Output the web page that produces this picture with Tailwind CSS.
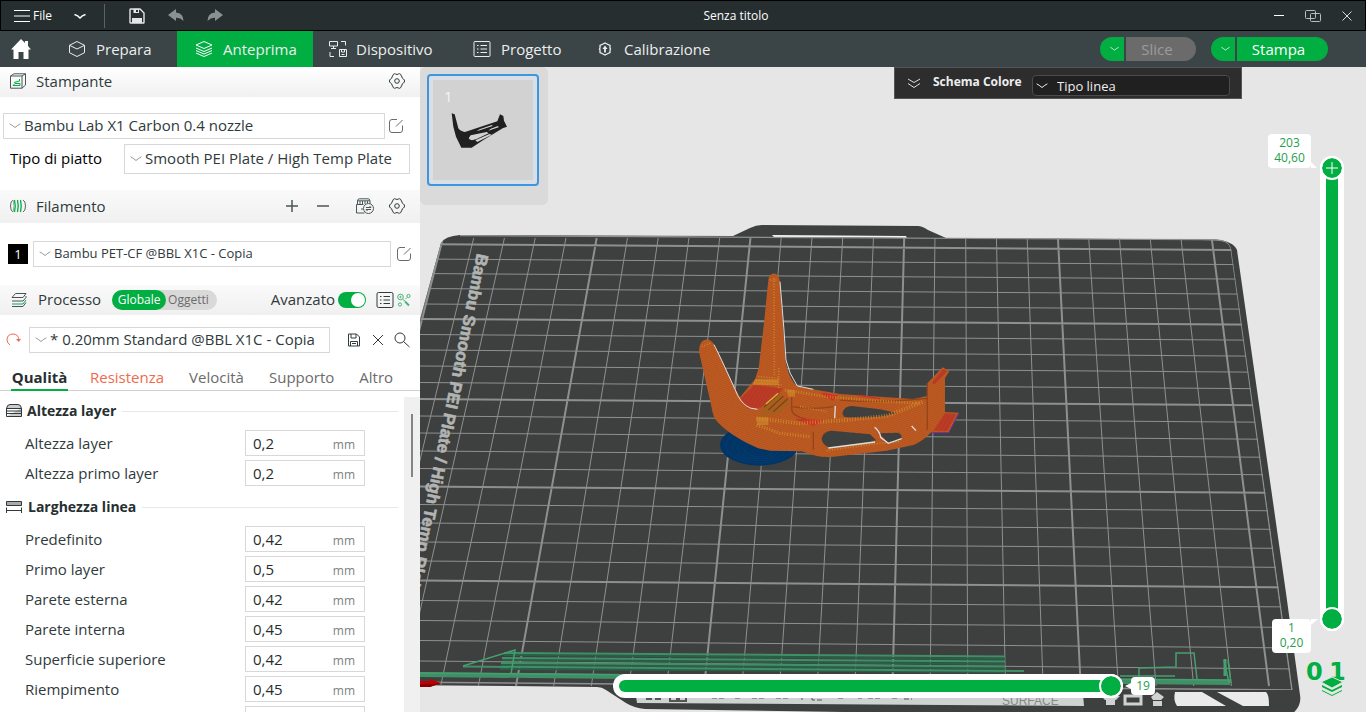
<!DOCTYPE html>
<html lang="it">
<head>
<meta charset="utf-8">
<title>Senza titolo</title>
<script src="https://cdn.jsdelivr.net/npm/@tailwindcss/browser@4"></script>
</head>
<body class="flex h-screen flex-col overflow-hidden bg-white font-['Open_Sans','Noto_Sans',sans-serif] text-[15px] leading-5 text-[#303a3c]">

<!-- shared symbols -->
<svg class="hidden" aria-hidden="true">
  <symbol id="chev" viewBox="0 0 12 8"><path d="M1 2 Q3 3 6 5.5 Q9 3 11 2" fill="none" stroke="currentColor" stroke-linecap="round"/></symbol>
  <symbol id="gear" viewBox="0 0 16 16"><g fill="none" stroke="currentColor"><path d="M4.500 1.200Q5.500 .3 6.500 1Q8 2 9.500 1Q10.500 .3 11.500 1.200L13 4Q13 5.500 14.500 6Q15.700 7 15.500 8Q15.700 9 14.500 10Q13 10.500 13 12L11.500 14.800Q10.500 15.700 9.500 15Q8 14 6.500 15Q5.500 15.700 4.500 14.800L3 12Q3 10.500 1.500 10Q.3 9 .5 8Q.3 7 1.500 6Q3 5.500 3 4Z" stroke-linejoin="round"/><circle cx="8" cy="8" r="2.300"/></g></symbol>
  <symbol id="edit" viewBox="0 0 16 16"><path d="M9 1.500H4Q1.500 1.500 1.500 4V12Q1.500 14.500 4 14.500H12Q14.500 14.500 14.500 12V7.500M8 8.500L14.500 2" fill="none" stroke="currentColor"/></symbol>
</svg>

<header class="flex h-[31px] shrink-0 items-center border border-black bg-[#262e30] text-white">
  <div class="flex w-60 items-center text-xs">
    <button class="ml-3 flex items-center gap-[3px]" aria-label="File"><svg class="h-4 w-[17px]" viewBox="0 0 17 16" stroke="#fff" stroke-width="1.200"><path d="M1 2.500H17M1 8H17M1 13.500H17"/></svg>File</button>
    <button class="ml-5" aria-label="Apri menu"><svg class="h-3 w-4" viewBox="0 0 16 12"><path d="M2.500 4.500Q6 5.500 8 8Q10 5.500 13.500 4.500" fill="none" stroke="#fff" stroke-width="1.400"/></svg></button>
    <span class="ml-4 h-6 w-px bg-[#5a6365]"></span>
    <button class="ml-6" aria-label="Salva"><svg class="h-4 w-4" viewBox="0 0 16 16" fill="none" stroke="#e4e6e6" stroke-width="1.400"><path d="M1 1.500Q1 1 1.500 1H11L15 5V14.500Q15 15 14.500 15H1.500Q1 15 1 14.500Z"/><path d="M3 10H13V15H3ZM4.500 1H10V5H4.500Z" fill="#e4e6e6" stroke="none"/><path d="M7 2H9V4H7Z" fill="#262e30" stroke="none"/></svg></button>
    <button class="ml-[23px]" aria-label="Annulla"><svg class="h-4 w-4" viewBox="0 0 16 16"><path d="M0 7L8 1V4.500Q15.500 5 15.500 13Q12 9.500 8 9.800V13Z" fill="#8b9091"/></svg></button>
    <button class="ml-[23px]" aria-label="Ripeti"><svg class="h-4 w-4" viewBox="0 0 16 16"><path d="M16 7L8 1V4.500Q.5 5 .5 13Q4 9.500 8 9.800V13Z" fill="#8b9091"/></svg></button>
  </div>
  <h1 class="flex-1 text-center text-xs">Senza titolo</h1>
  <div class="flex w-[134px] items-center justify-end gap-5 pr-3">
    <button aria-label="Riduci"><svg class="h-3 w-3" viewBox="0 0 12 12"><path d="M1 5.500H11" stroke="#fff"/></svg></button>
    <button aria-label="Ripristina"><svg class="h-3 w-4" viewBox="0 0 16 12" fill="none" stroke="#b9bdbe"><rect x=".5" y=".5" width="10" height="8" rx="1"/><rect x="5.500" y="3.500" width="10" height="8" rx="1"/></svg></button>
    <button aria-label="Chiudi"><svg class="h-3 w-3" viewBox="0 0 12 12"><path d="M1.500 1.500L10.500 10.500M10.500 1.500L1.500 10.500" stroke="#d8dbdb"/></svg></button>
  </div>
</header>

<nav class="flex h-9 shrink-0 items-stretch bg-[#3b4446] text-[#eceeee]">
  <button class="flex w-[41px] items-center justify-center" aria-label="Home"><svg class="h-5 w-5" viewBox="0 0 20 20"><path d="M10 0L14 4V2H17V7L20 10.500H17.500V20H12.500V13H7.500V20H2.500V10.500H0Z" fill="#fff"/></svg></button>
  <button class="flex w-[136px] items-center gap-[10px] pl-[27px]"><svg class="h-[18px] w-[18px]" viewBox="0 0 18 18" fill="none" stroke="currentColor"><path d="M9 1.500L16.500 5.300V12.700L9 16.500L1.500 12.700V5.300ZM1.500 5.300L9 9L16.500 5.300"/></svg>Prepara</button>
  <button class="flex w-[136px] items-center gap-[10px] bg-[#00ae42] pl-[18px]"><svg class="h-[18px] w-[18px]" viewBox="0 0 18 18" fill="none" stroke="#fff"><path d="M9 1.500L17 5L9 8.500L1 5Z M1 8L9 11.500L17 8M1 10.500L9 14L17 10.500M1 13L9 16.500L17 13"/></svg>Anteprima</button>
  <button class="flex w-[142px] items-center gap-2 pl-[15px]"><svg class="h-[18px] w-5" viewBox="0 0 20 18" fill="none" stroke="currentColor"><path d="M1.500 1.500H9.500V6H1.500ZM5.500 6V8M3 8.500H8M13 1.500H17.500V5.500M2 12V16.500H6M11.500 9.500H18.500V16.500H11.500ZM13.500 9.500V12H16.500V9.500M13.500 14.500H16.500"/></svg>Dispositivo</button>
  <button class="flex w-[126px] items-center gap-[10px] pl-[18px]"><svg class="h-[18px] w-[18px]" viewBox="0 0 18 18" fill="none" stroke="currentColor"><rect x="1" y="1.500" width="16" height="15" rx="1"/><path d="M4 5.500H5.500M7.500 5.500H14M4 9H5.500M7.500 9H14M4 12.500H5.500M7.500 12.500H14"/></svg>Progetto</button>
  <button class="flex w-[140px] items-center gap-[11px] pl-4"><svg class="h-4 w-4" viewBox="0 0 16 16" fill="none" stroke="currentColor" stroke-width="1.300"><path d="M6 3L8 2L10 3L13 4.500V7L13.500 8L13 9V11.500L10 13L8 14L6 13L3 11.500V9L2.500 8L3 7V4.500Z"/><path d="M8 11.500V7" stroke-width="1.800"/><path d="M5.500 8L8 4.500L10.500 8Z" fill="currentColor" stroke="none"/></svg>Calibrazione</button>
  <div class="ml-auto flex items-center gap-[15px] pr-[38px] text-base">
    <div class="flex gap-0.5">
      <button class="flex h-6 w-6 items-center justify-center rounded-l-full bg-[#00ae42] pl-1 text-white" aria-label="Opzioni slice"><svg class="h-2 w-[9px]"><use href="#chev"/></svg></button>
      <button class="h-6 w-[70px] rounded-r-full bg-[#6b6b6b] pr-2 text-[15px] text-[#9c9c9c]">Slice</button>
    </div>
    <div class="flex gap-0.5">
      <button class="flex h-6 w-6 items-center justify-center rounded-l-full bg-[#00ae42] pl-1 text-white" aria-label="Opzioni stampa"><svg class="h-2 w-[9px]"><use href="#chev"/></svg></button>
      <button class="h-6 w-[91px] rounded-r-full bg-[#00ae42] pr-2 text-[15px] text-white">Stampa</button>
    </div>
  </div>
</nav>

<div class="flex min-h-0 flex-1">
<aside class="flex w-[420px] shrink-0 flex-col overflow-hidden">
  <div class="flex h-[30px] shrink-0 items-center bg-linear-to-b from-white to-[#f0f0f0] pr-[15px] pb-0.5 pl-[10px]">
    <svg class="mr-[10px] h-4 w-4" viewBox="0 0 16 16" fill="none" stroke="#4b5557"><path d="M.5 3L4 .8H15.500V12L12 15.200H.5ZM.5 3H12V15.200M12 3L15.500 .8"/><path d="M3 12.500L5 10.500H10V12.500ZM4 9.500L9.500 8V6" stroke="#00ae42"/></svg>
    <h2 class="flex-1">Stampante</h2>
    <button aria-label="Impostazioni stampante"><svg class="h-4 w-4"><use href="#gear"/></svg></button>
  </div>
  <div class="mt-4 flex items-center gap-[3px] pl-[3px]">
    <div class="relative w-[382px]"><select aria-label="Stampante" class="block h-[26px] w-full appearance-none border border-[#d8d8d8] bg-white pb-0.5 pl-5"><option>Bambu Lab X1 Carbon 0.4 nozzle</option></select><svg class="pointer-events-none absolute top-[9px] left-[6px] h-2 w-3 text-[#999]"><use href="#chev"/></svg></div>
    <button aria-label="Modifica stampante" class="text-[#6b6b6b]"><svg class="h-4 w-4"><use href="#edit"/></svg></button>
  </div>
  <div class="mt-[5px] flex items-center pl-[10px]">
    <label for="piatto" class="w-[114px] pb-0.5 text-black">Tipo di piatto</label>
    <div class="relative w-[286px]"><select id="piatto" class="block h-[30px] w-full appearance-none border border-[#d8d8d8] bg-white pb-0.5 pl-5"><option>Smooth PEI Plate / High Temp Plate</option></select><svg class="pointer-events-none absolute top-[11px] left-[6px] h-2 w-3 text-[#999]"><use href="#chev"/></svg></div>
  </div>
  <div class="mt-4 flex h-[33px] shrink-0 items-center bg-linear-to-b from-[#fafafa] to-[#f0f0f0] pr-[15px] pb-0.5 pl-[10px]">
    <svg class="mr-[10px] h-4 w-4" viewBox="0 0 16 16" fill="none"><path d="M3 2Q.500 3 .5 8Q.5 13 3 14M13 2Q15.500 3 15.500 8Q15.500 13 13 14" stroke="#5c6668"/><path d="M4.500 2Q6 8 4.500 14M7.500 2Q9 8 7.500 14M10.500 2Q12 8 10.500 14" stroke="#00ae42" stroke-width="1.300"/><path d="M3 2Q5 8 3 14" stroke="#8fae9b"/></svg>
    <h2 class="flex-1">Filamento</h2>
    <div class="flex items-center">
      <button aria-label="Aggiungi filamento" class="mr-[19px]"><svg class="h-3 w-3" viewBox="0 0 12 12"><path d="M6 0V12M0 6H12" stroke="#4b5557" stroke-width="1.500"/></svg></button>
      <button aria-label="Rimuovi filamento" class="mr-[27px]"><svg class="h-3 w-3" viewBox="0 0 12 12"><path d="M0 6H12" stroke="#4b5557" stroke-width="1.500"/></svg></button>
      <button aria-label="AMS" class="mr-[15px]"><svg class="h-4 w-[18px]" viewBox="0 0 18 16" fill="none" stroke="#4b5557"><path d="M1.500 6V3Q1.500 .8 3.500 .8H12Q14 .8 14 3V6M1.500 2.800H14M4 3V6.500M6.500 3V6.500M9 3V6M11.500 3V5M.5 6.500H7.500M.5 6.500V15H8.500M5 11H7"/><circle cx="12.500" cy="10.500" r="5" fill="#f4f4f4"/><path d="M10 9.500H15L13.500 8M15 11.500H10L11.500 13"/></svg></button>
      <button aria-label="Impostazioni filamento"><svg class="h-4 w-4"><use href="#gear"/></svg></button>
    </div>
  </div>
  <div class="mt-[18px] flex items-center pl-2 text-[13px]">
    <button class="mr-[5px] h-5 w-5 bg-black text-white">1</button>
    <div class="relative w-[358px]"><select aria-label="Filamento 1" class="block h-[26px] w-full appearance-none border border-[#d8d8d8] bg-white pb-0.5 pl-5"><option>Bambu PET-CF @BBL X1C - Copia</option></select><svg class="pointer-events-none absolute top-[9px] left-[6px] h-2 w-3 text-[#999]"><use href="#chev"/></svg></div>
    <button aria-label="Modifica filamento" class="ml-[5px] text-[#6b6b6b]"><svg class="h-4 w-4"><use href="#edit"/></svg></button>
  </div>
  <div class="mt-[18px] flex h-[30px] shrink-0 items-center bg-linear-to-b from-[#fafafa] to-[#f0f0f0] pr-[9px] pl-[11px]">
    <svg class="mr-[11px] h-4 w-4" viewBox="0 0 16 16" fill="none" stroke="#4b5557"><path d="M4.500 1.500H15L12 5.500H1ZM1 9H12L15 5.500V4M1 14.500H12L15 10.500"/><path d="M1 12H12L15 8" stroke="#00ae42"/></svg>
    <h2 class="pb-0.5">Processo</h2>
    <div class="ml-[11px] flex h-5 items-center rounded-full bg-[#d9d9d9] pr-2 text-xs text-[#6b6b6b]">
      <button class="h-5 w-[54px] rounded-full bg-[#00ae42] text-white">Globale</button><button class="ml-0.5">Oggetti</button>
    </div>
    <label for="avanzato" class="ml-auto pb-0.5">Avanzato</label>
    <input id="avanzato" type="checkbox" checked class="ml-[3px] h-4 w-7 appearance-none rounded-full bg-[#00ae42] after:ml-[13px] after:mt-px after:block after:h-[14px] after:w-[14px] after:rounded-full after:bg-white">
    <button aria-label="Elenco" class="ml-[10px]"><svg class="h-[18px] w-[18px]" viewBox="0 0 18 18" fill="none" stroke="#303a3c"><rect x="1" y="1.500" width="16" height="15" rx="1.500"/><path d="M4 5.500H5.500M7.500 5.500H14M4 9H5.500M7.500 9H14M4 12.500H5.500M7.500 12.500H14"/></svg></button>
    <button aria-label="Confronta" class="ml-[3px]"><svg class="h-[14px] w-[14px]" viewBox="0 0 14 14" fill="none" stroke="#48b573"><circle cx="3.500" cy="4" r="2.800"/><circle cx="3.500" cy="4" r=".7"/><circle cx="11.500" cy="3" r="1.600"/><circle cx="3" cy="11.500" r="1.600"/><path d="M6 6.500L8 8M10 4.500L8.500 6"/><path d="M8 8.500L12 12.500" stroke-width="1.800"/></svg></button>
  </div>
  <div class="mt-3 flex items-center pl-[6px]">
    <button aria-label="Ripristina valori"><svg class="h-4 w-4" viewBox="0 0 16 16" fill="none" stroke="#ee6b4d"><path d="M4 13Q1 11 1 7.500Q1.500 2 7 2Q12.500 2 13 8"/><path d="M10 7H15L12.700 10Z" fill="#ee6b4d" stroke="none"/></svg></button>
    <div class="relative ml-[7px] w-[301px]"><select aria-label="Processo" class="block h-[26px] w-full appearance-none border border-[#d8d8d8] bg-white pb-0.5 pl-5"><option>* 0.20mm Standard @BBL X1C - Copia</option></select><svg class="pointer-events-none absolute top-[9px] left-[6px] h-2 w-3 text-[#999]"><use href="#chev"/></svg></div>
    <button aria-label="Salva profilo" class="ml-[17px]"><svg class="h-[14px] w-[14px]" viewBox="0 0 14 14" fill="none" stroke="#303a3c"><path d="M1.500 1H9.500L12.500 4V13H1.500ZM4 1V5H9V1M3.500 13V8.500H10.500V13M5 10.500H9"/></svg></button>
    <button aria-label="Elimina profilo" class="ml-[11px]"><svg class="h-3 w-3" viewBox="0 0 12 12"><path d="M1 1L11 11M11 1L1 11" stroke="#303a3c"/></svg></button>
    <button aria-label="Cerca" class="ml-[10px]"><svg class="h-4 w-4" viewBox="0 0 16 16" fill="none" stroke="#303a3c"><circle cx="6" cy="6" r="5"/><path d="M9.500 9.500L15.500 15"/></svg></button>
  </div>
  <div class="mt-3 flex h-[26px] shrink-0 items-stretch gap-[22px] border-b border-[#d0d0d0] pl-[11px] text-[#6b6b6b]">
    <button class="-mb-px w-[57px] border-b-2 border-[#00ae42] font-bold text-[#262e30]">Qualità</button>
    <button class="pb-0.5 text-[#ee6b4d]">Resistenza</button>
    <button class="ml-[3px] pb-0.5">Velocità</button>
    <button class="ml-[3px] pb-0.5">Supporto</button>
    <button class="ml-[3px] pb-0.5">Altro</button>
  </div>
  <div class="flex min-h-0 flex-1 overflow-hidden">
    <div class="flex-1 pt-[5px] pr-[6px]">
      <h3 class="flex h-[30px] items-center pl-[6px] text-sm font-bold text-[#262e30]"><svg class="mr-[5px] h-4 w-4" viewBox="0 0 16 16" fill="none" stroke="#303a3c"><path d="M.5 5.500Q1 1.500 4 1.500H12Q15 1.500 15.500 5.500ZM.5 8H15.500M.5 10.500H15.500M.5 13.500H15.500V5M.5 5V13.500" fill="#ccc"/></svg>Altezza layer<span class="ml-[6px] h-px flex-1 bg-[#e8e8e8]"></span></h3>
      <div id="g1" class="mt-0.5"></div>
      <h3 class="mt-1 flex h-[30px] items-center pl-[6px] text-sm font-bold text-[#262e30]"><svg class="mr-[6px] h-4 w-4" viewBox="0 0 16 16" fill="none" stroke="#303a3c"><path d="M.5 2.500H15.500V6.500H.5Z" fill="#aaa"/><path d="M.5 8.500V14M15.500 8.500V14M.5 11.500H15.500"/></svg>Larghezza linea<span class="ml-[6px] h-px flex-1 bg-[#e8e8e8]"></span></h3>
      <div id="g2" class="mt-0.5"></div>
    </div>
    <div class="mt-[6px] w-4 bg-[#f0f0f0] pt-[17px]"><div class="ml-[7px] h-[63px] w-0.5 bg-[#858585]"></div></div>
  </div>
</aside>

<main class="relative min-w-0 flex-1 overflow-hidden bg-[#e6e6e6]">
  <svg class="absolute inset-0 h-full w-full" viewBox="420 67 946 645" preserveAspectRatio="xMinYMin slice" role="img" aria-label="Anteprima del modello sul piatto">
    <defs>
      <clipPath id="bed"><path d="M400 395L441 243Q445 236 460 235L1216 239Q1229 240 1231 248L1293 690H400Z"/></clipPath>
      <pattern id="hatch" width="3" height="6" patternUnits="userSpaceOnUse" patternTransform="rotate(20)"><rect width="3" height="6" fill="#c05c23"/><rect width="3" height="3" fill="#b2531f"/></pattern>
      <pattern id="redhatch" width="10" height="10" patternUnits="userSpaceOnUse" patternTransform="rotate(30)"><rect width="10" height="10" fill="#c4362c"/><rect width="4" height="10" fill="#a8401c"/></pattern>
    </defs>
    <path d="M400 392L441 243Q445 236 460 235L733 236L750 228Q756 225 762 225L918 226Q922 226 928 230L946 238L1216 239.500Q1233 241 1237 250L1286 593L1300 695Q1302 706 1292 714H976L645 709Q634 708 626 703L606 690Q602 687 597 687L400 685Z" fill="#3e403f"/>
    <path d="M772 235L906 236L907 238L774 237Z" fill="#f2f2f2"/>
    <g clip-path="url(#bed)" fill="none" stroke="#8e908f">
      <path id="thin" stroke-width="1"/>
      <path id="bold" stroke-width="2"/>
      <path d="M1190 239L1216 240Q1229 240 1231 248L1292 690M441 243L400 392M400 682L1292 690M460 235.500L1200 239.500" stroke-width="1.500"/>
    </g>
    <text transform="translate(477 253) rotate(101.500)" font-family="Liberation Sans" font-weight="700" font-size="17" fill="#b2b4b3" stroke="#b2b4b3" stroke-width=".6">Bambu Smooth PEI Plate / High Temp Plate</text>

    <!-- lower label strip and cut-outs of the plate -->
    <path d="M635 690L1083 694L1084 706L637 703Z" fill="#cfd2d2"/>
    <g stroke="#555" stroke-width="2" fill="none"><path d="M646 699H652M655 699H661M670 698V701H686V698M676 699H680"/><path d="M712 698H724M735 698H742M752 698H766M776 698H790M802 698V700M812 698V700H824M838 698H844M858 698H862M868 698H880M892 698H898M904 699H912" stroke-width="1" stroke-dasharray="5 2"/></g>
    <text x="1002" y="705" font-family="Liberation Sans" font-size="12" fill="#888">SURFACE</text>
    <g fill="#cfd2d2"><path d="M1101 696H1120L1116 700H1105ZM1106 700H1115V705H1106ZM1151 697L1157 692L1164 697L1161 700H1153ZM1153 701H1162V706H1153Z"/><path d="M1125 696H1141V704H1125Z" fill="none" stroke="#cfd2d2" stroke-width="3"/></g>
    <path d="M1175 692H1202L1226 706H1177Q1173 700 1175 692ZM1217 692H1266Q1269 694 1269 706H1243Z" fill="#eaeaea"/>

    <!-- wipe and purge moves -->
    <g fill="none" stroke="#2a5f47" stroke-width="2"><path d="M504 655L1005 659M502 660L1005 664M501 665L1005 668.500M500 669L1005 672"/></g>
    <g fill="none" stroke="#3f8f67" stroke-width="2"><path d="M504 653L1005 656.500M502 658L1005 661.500M501 663L1005 666.500M463 666.500L1024 671"/><path d="M420 674.500L1230 682.500" stroke-width="5"/></g>
    <g fill="none" stroke="#45a070" stroke-width="1.500"><path d="M420 673L1230 680M463 666L515 650L511 674M1139 684V668L1176 667V653H1194L1197 679M1224 660L1229 683M1228 660L1231 683M1120 676H1175"/><path d="M1225 659V676" stroke-width="3"/></g>
    <path d="M416 681H430V679L441 683L430 687H416Z" fill="#c00000"/><path d="M416 684H430L441 683L430 687H416Z" fill="#8a0000"/>

    <!-- sliced part: one drawing unit is a third of a plate unit -->
    <g transform="translate(640 250) scale(.3333)">
      <ellipse cx="358" cy="585" rx="118" ry="62" fill="#003566"/>
      <g fill="none" stroke="#0d4c85" stroke-width="2" opacity=".5"><ellipse cx="358" cy="587" rx="100" ry="52"/><ellipse cx="358" cy="590" rx="82" ry="42"/><ellipse cx="358" cy="594" rx="64" ry="32"/><ellipse cx="358" cy="598" rx="46" ry="22"/></g>
      <path d="M385 90C388 64 415 64 419 90L430 240L436 330C442 365 455 398 475 410L600 432L720 440L820 447L862 438V400L908 352L928 364L915 385V486L956 488L926 548H872Q850 572 820 585L740 602L600 618Q560 624 530 618L485 604L390 602L355 595C300 570 260 545 232 515C216 500 216 470 210 450L178 310C174 275 195 262 212 272C226 282 230 300 237 312L285 415L300 442L345 388L356 355L372 220Z" fill="url(#hatch)"/>
      <path d="M607 490Q612 468 636 468L720 478L770 489L735 498Q650 506 612 500ZM545 565Q548 545 575 542L690 553L708 570L690 577L570 593Q545 585 545 565ZM718 550L775 548Q792 556 780 570L745 580Z" fill="#3e403f"/>
      <path d="M455 470Q520 480 580 470M455 440L455 480Q460 500 500 508M520 545V600M862 400V540M600 450Q720 460 860 445" stroke="#95451a" stroke-width="4" fill="none"/>
      <path d="M300 447L342 404L430 416L372 472L325 476Z" fill="url(#redhatch)"/>
      <path d="M365 470L410 430L452 455L420 490L365 500Z" fill="#a85f1e"/>
      <path d="M372 472L418 430M385 480L430 438M400 485L443 446" stroke="#7e431a" stroke-width="4"/>
      <path d="M378 462L415 430" stroke="#e3b53a" stroke-width="4"/>
      <path d="M875 400L908 358L922 364L885 402ZM915 490L950 492L922 543L880 542Z" fill="url(#redhatch)"/>
      <path d="M545 430L590 438L578 450ZM470 508L545 512L520 526ZM655 436L720 446" fill="#cc3027" stroke="#cc3027" stroke-width="4"/>
      <path d="M873 548H926L957 490" stroke="#74309a" stroke-width="3" fill="none"/>
      <g fill="none" stroke="#d08f2c" stroke-width="5" stroke-dasharray="3 5" opacity=".8"><path d="M402 85L403 380M342 400L425 405M355 380L420 385M348 390L420 395M416 355V415M390 90H412M185 290L210 280" /><path d="M350 505L480 520L620 510L740 498L850 455" stroke-width="12"/><path d="M350 525L420 550L510 560" stroke-width="10"/><path d="M435 420L560 440L700 452L840 460" stroke-width="9"/><path d="M560 602L700 582L780 575M480 470L560 485"/></g>
      <path d="M348 502H385V525H352ZM440 420H465V440H445ZM345 388H415V405H338Z" fill="#d59a2c" opacity=".5"/>
      <g fill="none" stroke="#dedede" stroke-width="3"><path d="M222 284Q236 310 285 418Q300 460 330 474L352 478"/><path d="M420 95L432 240L438 330Q446 370 472 408L520 418"/><path d="M586 468L584 505M565 594L705 576M704 532Q720 545 722 562L745 580L785 566M815 528L828 542" stroke-width="4"/></g>
    </g>

    <g fill="#00ae42"><text x="1306" y="680" font-family="DejaVu Sans" font-weight="700" font-size="24">0</text><text x="1329" y="680" font-family="DejaVu Sans" font-weight="700" font-size="24">1</text>
      <path d="M1332 677L1343 682L1332 688L1321 682Z" stroke="#e6e6e6"/><path d="M1322 685L1332 690L1342 685V687L1332 692L1322 687ZM1322 690L1332 695L1342 690V691L1332 696L1322 691Z"/></g>
  </svg>

  <div class="absolute top-0 left-0 h-[138px] w-32 rounded-md bg-[#dadada] pt-[7px] pl-[7px]">
    <button class="relative block h-[112px] w-[112px] rounded border-2 border-[#3d97e0] bg-[#d9dfe4] p-1" aria-label="Piatto 1">
      <svg class="h-full w-full bg-[#d2d2d2]" viewBox="39 240 300 300"><g fill="#202020"><path d="M95 340L104 343L115 385Q122 395 135 396L232 364L240 343L250 348L252 362L261 380L248 385L190 420L155 443H124L108 410L100 380ZM146 415Q150 424 168 418L206 400L200 396L152 406ZM172 426L215 404L208 402L166 421ZM170 394L218 378L216 375L178 388ZM205 392L236 382L234 378L212 386Z" fill-rule="evenodd"/></g></svg>
      <span class="absolute top-[10px] left-[15px] text-[15px] text-[#f4f4f4]">1</span>
    </button>
  </div>

  <div class="absolute top-0 right-[124px] flex h-8 w-[348px] items-center border border-[#55565a] bg-[#2d2d2e] pl-3 text-[13px] text-[#eee]">
    <button aria-label="Comprimi"><svg class="h-3 w-[14px]" viewBox="0 0 14 12" fill="none" stroke="#ddd"><path d="M1 2L7 5.500L13 2M1 6.500L7 10.500L13 6.500"/></svg></button>
    <label for="schema" class="ml-3 w-[99px] pb-0.5 text-xs font-bold">Schema Colore</label>
    <div class="relative mt-1"><select id="schema" class="block h-[21px] w-[198px] appearance-none rounded border border-[#4b4b4f] bg-[#202020] pb-0.5 pl-6"><option>Tipo linea</option></select><svg class="pointer-events-none absolute top-[7px] left-1 h-2 w-3"><use href="#chev"/></svg></div>
  </div>

  <!-- layer range -->
  <div class="absolute top-[89px] right-[22px] h-[475px] w-6 rounded-full bg-white">
    <div class="absolute inset-x-[6px] top-3 bottom-3 bg-[#00ae42]"></div>
    <div class="absolute top-0.5 left-0.5 flex h-5 w-5 items-center justify-center rounded-full bg-[#00ae42] outline-2 outline-white"><svg class="h-3 w-3" viewBox="0 0 12 12"><path d="M6 0V12M0 6H12" stroke="#fff"/></svg></div>
    <div class="absolute bottom-0.5 left-0.5 h-5 w-5 rounded-full bg-[#00ae42] outline-2 outline-white"></div>
    <input type="range" aria-label="Layer" min="1" max="203" value="203" class="absolute inset-0 h-full w-full opacity-0 [writing-mode:vertical-lr]">
  </div>
  <output class="absolute top-[67px] right-[55px] w-[43px] rounded-sm bg-white pt-px pb-[3px] text-center text-xs leading-[15px] text-[#1f9d4d]">203<br>40,60<svg class="absolute -right-[6px] bottom-0 h-[6px] w-[6px]" viewBox="0 0 6 6"><path d="M0 0L6 6H0Z" fill="#fff"/></svg></output>
  <output class="absolute top-[552px] right-[55px] w-[39px] rounded-sm bg-white pt-px pb-[3px] text-center text-xs leading-[15px] text-[#1f9d4d]">1<br>0,20<svg class="absolute top-0 -right-[7px] h-[6px] w-[7px]" viewBox="0 0 7 6"><path d="M0 0H7L0 6Z" fill="#fff"/></svg></output>

  <!-- move range -->
  <div class="absolute top-[607px] left-[193px] h-6 w-[510px] rounded-full bg-white">
    <div class="absolute inset-[6px] rounded-full bg-[#00ae42]"></div>
    <div class="absolute top-0.5 right-0.5 h-5 w-5 rounded-full bg-[#00ae42] outline-2 outline-white"></div>
    <input type="range" aria-label="Movimento" min="0" max="19" value="19" class="absolute inset-0 h-full w-full opacity-0">
  </div>
  <output class="absolute top-[610px] left-[711px] w-6 rounded-sm bg-white text-center text-xs leading-[18px] text-[#1f9d4d]">19<svg class="absolute top-[6px] -left-[6px] h-[6px] w-[6px]" viewBox="0 0 6 6"><path d="M6 0V6L0 3Z" fill="#fff"/></svg></output>
</main>
</div>

<template id="row">
  <div class="flex h-[30px] items-center pl-[25px]">
    <label class="w-[220px]"></label>
    <div class="flex h-[26px] w-[120px] items-center border border-[#d8d8d8] pr-[9px] pl-[7px]">
      <input type="text" class="min-w-0 flex-1 text-[#262e30]"><span class="pt-1 text-xs text-[#7c8283]">mm</span>
    </div>
  </div>
</template>
<script>
  const tpl = document.getElementById('row');
  let n = 0;
  function fill(id, rows) {
    for (const [name, value] of rows) {
      const r = tpl.content.cloneNode(true), l = r.querySelector('label'), i = r.querySelector('input');
      i.id = 'campo' + (++n); l.htmlFor = i.id; l.textContent = name; i.setAttribute('value', value);
      if (!value) r.querySelector('span').remove();
      document.getElementById(id).append(r);
    }
  }
  fill('g1', [['Altezza layer', '0,2'], ['Altezza primo layer', '0,2']]);
  fill('g2', [['Predefinito', '0,42'], ['Primo layer', '0,5'], ['Parete esterna', '0,42'], ['Parete interna', '0,45'], ['Superficie superiore', '0,42'], ['Riempimento', '0,45'], ['', '']]);

  // Plate grid in perspective: every fifth line is heavy.
  const left = [244, 259, 273.5, 288.5, 304, 319, 334.5, 350, 366, 382.5, 399, 416, 433, 451, 468.5, 486.5, 504.5, 523, 542, 561, 580.5, 600.5, 620.5, 640.5, 661];
  const right = [250.5, 265, 279.5, 294.5, 309.5, 325, 340.5, 356.5, 372.5, 389, 405.5, 422.5, 439.5, 457.5, 475, 493, 511, 529.5, 548.5, 567.5, 587.5, 607, 627.5, 648, 669];
  let thin = '', bold = '';
  left.forEach((y, k) => { const s = `M420 ${y}L1300 ${right[k]}`; k % 5 ? thin += s : bold += s; });
  for (let k = -9; k < 25; k++) {
    const s = `M${473.7 + 30.75 * k} 238L${365.4 + 37.65 * k} 686`;
    (k + 1) % 5 ? thin += s : bold += s;
  }
  document.getElementById('thin').setAttribute('d', thin);
  document.getElementById('bold').setAttribute('d', bold);
</script>
</body>
</html>
